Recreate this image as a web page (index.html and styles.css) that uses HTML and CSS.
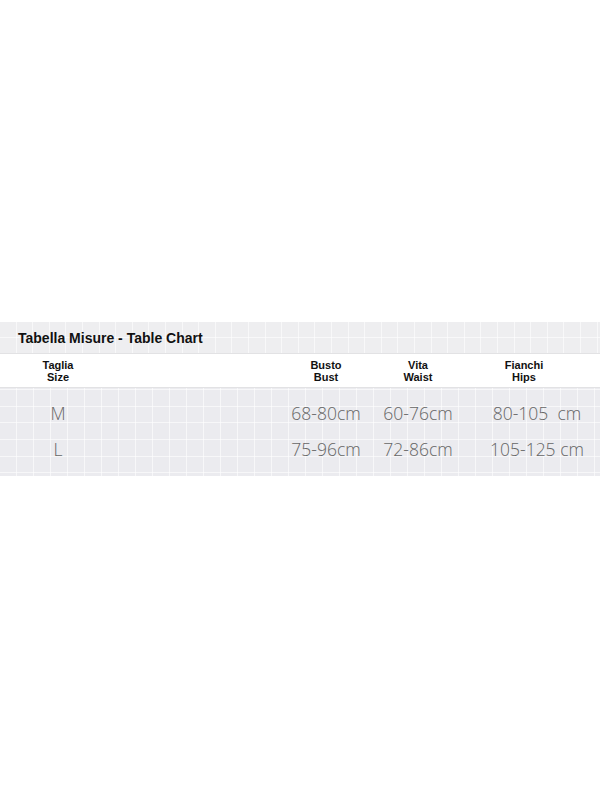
FILE: index.html
```html
<!DOCTYPE html>
<html>
<head>
<meta charset="utf-8">
<link rel="stylesheet" href="styles.css">
</head>
<body>
<div class="chart">
  <div class="title-band">
    <h1 class="title">Tabella Misure - Table Chart</h1>
  </div>
  <div class="head-row">
    <div class="hcell">Taglia<br>Size</div>
    <div class="spacer"></div>
    <div class="hcell">Busto<br>Bust</div>
    <div class="hcell">Vita<br>Waist</div>
    <div class="hcell">Fianchi<br>Hips</div>
    <div class="spacer"></div>
  </div>
  <div class="body">
    <div class="row">
      <div class="size">M</div>
      <div class="spacer"></div>
      <div class="val">68-80cm</div>
      <div class="val">60-76cm</div>
      <div class="val hips">80-105  cm</div>
      <div class="spacer"></div>
    </div>
    <div class="row">
      <div class="size">L</div>
      <div class="spacer"></div>
      <div class="val">75-96cm</div>
      <div class="val">72-86cm</div>
      <div class="val hips">105-125 cm</div>
      <div class="spacer"></div>
    </div>
  </div>
</div>
</body>
</html>
```

FILE: styles.css
```css
html, body {
  margin: 0;
  padding: 0;
  background: #ffffff;
}
body {
  width: 600px;
  height: 800px;
  padding-top: 322px;
  box-sizing: border-box;
}
.chart {
  width: 600px;
}
.title-band {
  height: 32px;
  display: flex;
  align-items: center;
  padding-left: 18px;
  background-color: #eeeef0;
  background-image:
    repeating-linear-gradient(90deg, transparent 0, transparent 15.6px, rgba(255,255,255,0.6) 15.6px, rgba(255,255,255,0.6) 16.6px),
    repeating-linear-gradient(180deg, transparent 0, transparent 15px, rgba(255,255,255,0.6) 15px, rgba(255,255,255,0.6) 16px);
  border-bottom: 1px solid #e2e2e4;
  box-sizing: border-box;
}
.title {
  margin: 0;
  font-family: "Liberation Sans", Arial, sans-serif;
  font-weight: bold;
  font-size: 14px;
  color: #111;
}
.head-row,
.row {
  display: grid;
  grid-template-columns: 116px 164px 92px 92px 120px 16px;
}
.head-row {
  height: 34px;
  align-items: center;
  background: #fff;
  border-bottom: 1px solid #e2e2e4;
  box-sizing: border-box;
}
.hcell {
  text-align: center;
  font-family: "Liberation Sans", Arial, sans-serif;
  font-weight: bold;
  font-size: 11px;
  line-height: 12px;
  color: #111;
}
.body {
  height: 88px;
  padding: 7px 0 9px;
  box-sizing: border-box;
  background-color: #ebebef;
  background-image:
    repeating-linear-gradient(90deg, transparent 0, transparent 16px, rgba(255,255,255,0.6) 16px, rgba(255,255,255,0.6) 17px),
    repeating-linear-gradient(180deg, transparent 0, transparent 1px, rgba(255,255,255,0.6) 1px, rgba(255,255,255,0.6) 2px, transparent 2px, transparent 16.7px);
}
.row {
  height: 36px;
  align-items: center;
}
.size,
.val {
  text-align: center;
  font-family: "Open Sans", "Noto Sans", sans-serif;
  font-weight: 300;
  font-size: 17.5px;
  color: #666;
  white-space: pre;
}
.hips {
  padding-left: 26px;
}
```
